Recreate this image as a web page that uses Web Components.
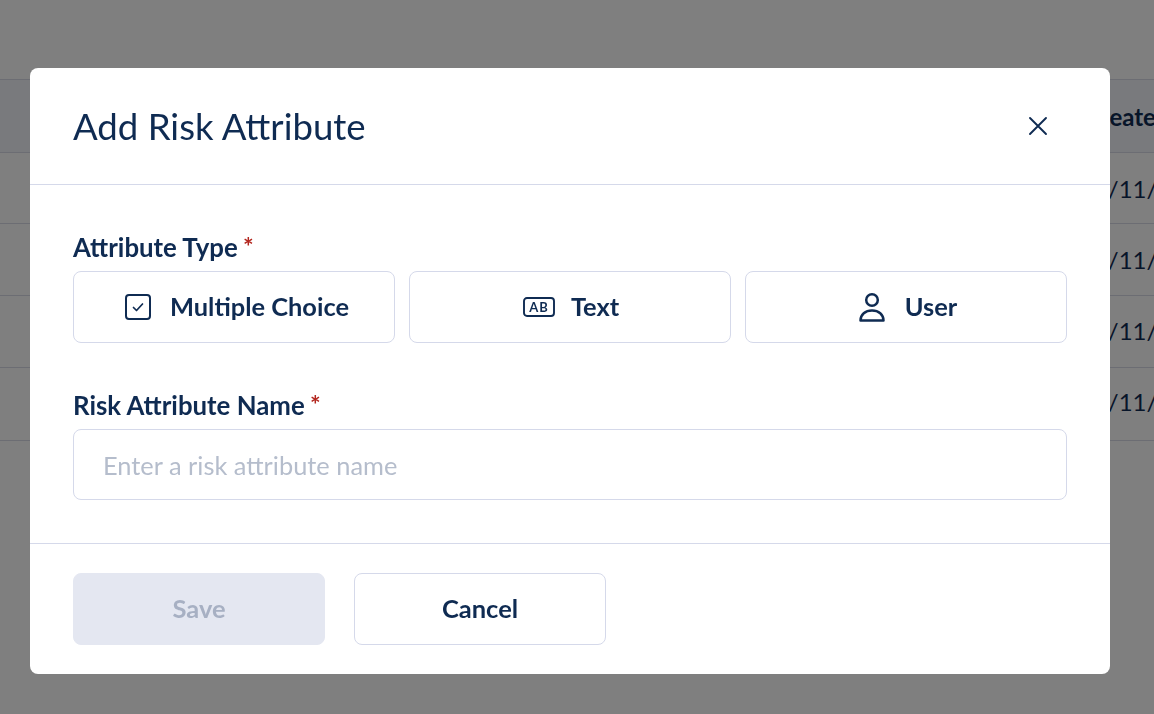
<!DOCTYPE html>
<html lang="en"><head><meta charset="utf-8"><title>Add Risk Attribute</title>
<style>
html,body{margin:0;height:100%;overflow:hidden;background:#fff;font-family:Lato,"Noto Sans",sans-serif;color:#0f2b52}
</style></head><body>
<bg-table></bg-table>
<modal-scrim>
  <risk-modal></risk-modal>
</modal-scrim>
<script>
const NAVY='#0f2b52';
function el(tag,html){
  customElements.define(tag,class extends HTMLElement{
    constructor(){super();this.attachShadow({mode:'open'}).innerHTML=html;}
  });
}
el('bg-table',`<style>
:host{display:block;padding-top:79px;height:714px;box-sizing:border-box;overflow:hidden}
.r{display:flex;box-sizing:border-box;border-top:1px solid #d8dbe6;height:72px;align-items:center;padding-left:1080px;white-space:nowrap;font-size:24px;color:${NAVY}}
.h{background:#f2f5fb;height:73px;font-weight:700;padding-left:1085px}
.s{height:71px}
.t{padding-bottom:2px}
.last{border-bottom:1px solid #d8dbe6;height:74px;padding-bottom:6px}
</style>
<div class="r h">Created</div><div class="r s">10/11/2021</div><div class="r">10/11/2021</div><div class="r t">10/11/2021</div><div class="r last">10/11/2021</div>`);
el('modal-scrim',`<style>
:host{position:fixed;inset:0;background:rgba(0,0,0,.5);display:block;padding:68px 44px 40px 30px;box-sizing:border-box}
</style><slot></slot>`);
el('form-label',`<style>
:host{display:block;font-size:25.8px;font-weight:700;line-height:32px;color:${NAVY};height:40px}
span{color:#b3261e;font-weight:700;position:relative;top:-1px;font-size:25px;margin-left:-1px}
</style><slot></slot> <span>*</span>`);
el('type-option',`<style>
:host{display:flex;align-items:center;justify-content:center;height:72px;box-sizing:border-box;border:1px solid #d5d9ea;border-radius:8px;padding:0 0 2px var(--p,4px);font-size:25.4px;font-weight:700;color:${NAVY};gap:var(--g,16px);background:#fff}
::slotted(svg){display:block;flex:none;margin-top:2px}
</style><slot name="icon"></slot><slot></slot>`);
el('action-button',`<style>
:host{display:flex;align-items:center;justify-content:center;width:252px;height:72px;box-sizing:border-box;padding-bottom:2px;border-radius:8px;font-size:25.5px;font-weight:700;border:1px solid #d5d9ea;background:#fff;color:${NAVY}}
:host([disabled]){background:#e4e7f1;border-color:#e4e7f1;color:#a7b0c3}
</style><slot></slot>`);
el('text-field',`<style>
:host{display:flex;align-items:center;height:71px;box-sizing:border-box;border:1px solid #d5d9ea;border-radius:8px;padding-left:29px;font-size:25.4px;color:#b5bdcc}
</style><slot></slot>`);
el('risk-modal',`<style>
:host{display:block;width:1080px;height:606px;background:#fff;border-radius:8px;overflow:hidden;color:${NAVY}}
header{height:117px;box-sizing:border-box;border-bottom:1px solid #d5d9ea;display:flex;align-items:center;justify-content:space-between;padding:0 61px 0 43px}
h1{margin:0;font-size:36.6px;font-weight:400;line-height:44px}
main{height:359px;box-sizing:border-box;border-bottom:1px solid #d5d9ea;padding:46px 43px 0}
.opts{display:grid;grid-template-columns:repeat(3,1fr);gap:14px;margin-bottom:46px}
footer{display:flex;gap:29px;padding:29px 43px 0}
svg{display:block}
</style>
<header><h1>Add Risk Attribute</h1>
<svg width="22" height="22" viewBox="0 0 22 22" fill="none" stroke="${NAVY}" stroke-width="1.9" stroke-linecap="round"><path d="M3 3l16 16M19 3L3 19"/></svg></header>
<main>
<form-label>Attribute Type</form-label>
<div class="opts">
<type-option style="--g:19px;--p:6px"><svg slot="icon" width="26" height="26" viewBox="0 0 26 26" fill="none" stroke="${NAVY}" stroke-width="2" stroke-linecap="round" stroke-linejoin="round"><rect x="1" y="1" width="24" height="24" rx="3"/><path d="M8.500 13.500l3 3 6-6.500" stroke-width="1.7"/></svg>Multiple Choice</type-option>
<type-option style="--p:2px"><svg slot="icon" width="32" height="20" viewBox="0 0 32 20" fill="none" stroke="${NAVY}" stroke-width="1.9" stroke-linejoin="round" style="font-family:Lato"><rect x="1" y="1" width="30" height="18" rx="3"/><text x="16" y="15" text-anchor="middle" font-size="13" font-weight="700" letter-spacing="1" fill="${NAVY}" stroke="none">AB</text></svg>Text</type-option>
<type-option style="--g:20px"><svg slot="icon" width="26" height="30" viewBox="0 0 26 30" fill="none" stroke="${NAVY}" stroke-width="2.500" stroke-linejoin="round"><circle cx="13" cy="8" r="5.800"/><path d="M1.500 28.500c0-6 4.800-10 11.500-10s11.500 4 11.500 10z"/></svg>User</type-option>
</div>
<form-label>Risk Attribute Name</form-label>
<text-field>Enter a risk attribute name</text-field>
</main>
<footer><action-button disabled>Save</action-button><action-button>Cancel</action-button></footer>`);
</script>
</body></html>
